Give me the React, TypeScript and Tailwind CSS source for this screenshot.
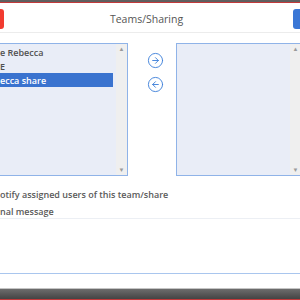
import { CircleArrowLeft, CircleArrowRight } from "lucide-react";

// Teams/Sharing dialog, cropped to the visible window.
const items = [
  { label: "e Rebecca", selected: false },
  { label: "E", selected: false },
  { label: "ecca share", selected: true },
];

function ScrollTrack() {
  return (
    <div className="flex w-[11px] flex-col items-center justify-between bg-[#efefef] py-[1px] text-[6px] leading-[8px] text-[#9a9a9a]">
      <span>▲</span>
      <span>▼</span>
    </div>
  );
}

export default function App() {
  return (
    <div className="flex h-[300px] w-[300px] flex-col overflow-hidden bg-white font-['Open_Sans',sans-serif]">
      <div className="h-[2px] bg-[#5f5f5f]" />
      <div className="h-[1px] bg-[#c2393a]" />

      {/* header */}
      <div className="flex h-[30px] items-start border-b border-[#ececec] pt-[6px]">
        <div className="h-[20px] w-[4px] rounded-r-[3px] bg-[#f23b30]" />
        <div className="flex-1 pr-[4px] text-center text-[10.5px] leading-[21px] text-[#555]">Teams/Sharing</div>
        <div className="h-[20px] w-[7px] rounded-l-[3px] bg-[#3a77d6]" />
      </div>

      {/* lists */}
      <div className="mt-[10px] flex h-[133px]">
        <div className="-ml-[10px] flex w-[138px] shrink-0 border border-[#8fb3e8] bg-[#e9edf7]">
          <div className="flex-1 pr-[3px] pt-[1px]">
            {items.map((it) => (
              <div
                key={it.label}
                className={
                  it.selected
                    ? "h-[14px] bg-[#3a73cf] pl-[9px] text-[9px] font-semibold leading-[15px] text-white"
                    : "h-[14px] pl-[9px] text-[9px] font-semibold leading-[15px] text-[#505050]"
                }
              >
                {it.label}
              </div>
            ))}
          </div>
          <ScrollTrack />
        </div>

        <div className="flex w-[48px] shrink-0 flex-col items-center gap-[7px] pl-[6px] pt-[9px] text-[#3d7fd9]">
          <CircleArrowRight size={17} strokeWidth={1.3} />
          <CircleArrowLeft size={17} strokeWidth={1.3} />
        </div>

        <div className="flex w-[126px] shrink-0 border border-[#8fb3e8] bg-[#e9edf7]">
          <div className="flex-1" />
          <ScrollTrack />
        </div>
      </div>

      <div className="mt-[12px] text-[9px] font-semibold leading-[14px] text-[#5a5a5a]">
        otify assigned users of this team/share
      </div>
      <div className="mt-[3px] text-[9px] font-semibold leading-[13px] text-[#5a5a5a]">nal message</div>

      <div className="-mx-[5px] h-[56px] border border-[#eceff4] border-b-[#a9c6ee] bg-white" />

      <div className="mt-auto h-[1px] bg-[#c4c4c4]" />
      <div className="h-[10px] bg-gradient-to-b from-[#6d6d6d] to-[#444]" />
      <div className="h-[1px] bg-[#c2393a]" />
    </div>
  );
}
